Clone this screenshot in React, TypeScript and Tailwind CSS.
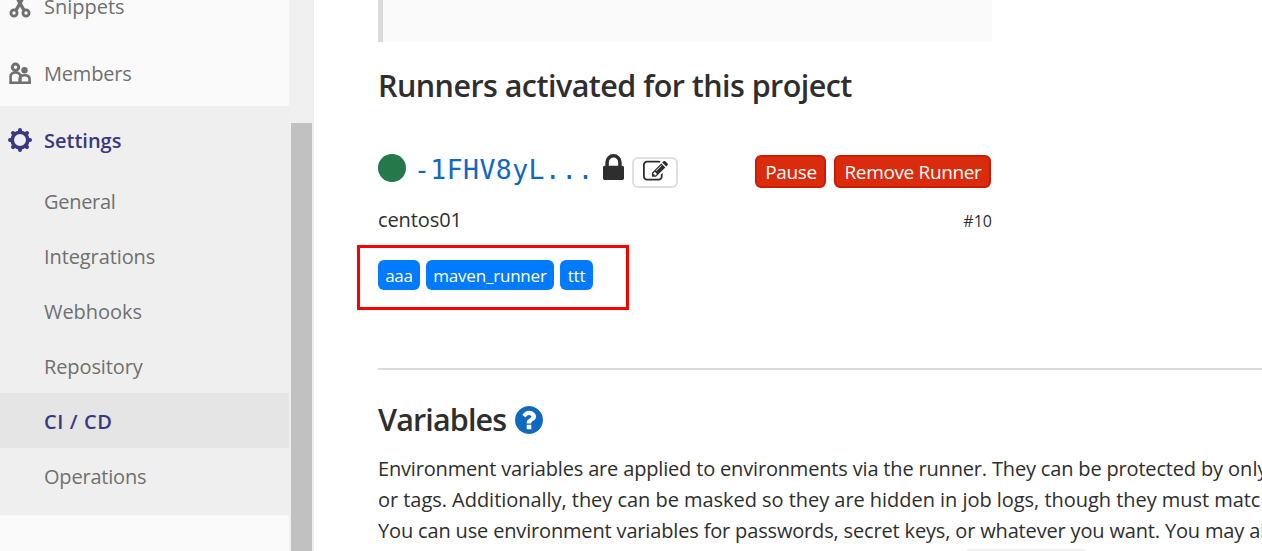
import type { ReactNode } from 'react';

const subItems = [
  { label: 'General', className: 'tracking-[-0.3px]' },
  { label: 'Integrations', className: 'tracking-[-0.1px]' },
  { label: 'Webhooks', className: 'tracking-[-0.05px]' },
  { label: 'Repository', className: 'tracking-[-0.1px]' },
  { label: 'CI / CD', className: 'bg-[#e5e5e5] font-[550] tracking-[0.6px] text-[#393982]' },
  { label: 'Operations', className: 'tracking-[-0.2px]' },
];

const Tag = ({ children, className }: { children: ReactNode; className: string }) => (
  <span className={`flex h-[30px] shrink-0 items-center justify-center whitespace-nowrap rounded-[6px] bg-[#007bff] pt-[2px] text-[17px] tracking-[-0.2px] text-white ${className}`}>{children}</span>
);

const DangerButton = ({ children, className }: { children: ReactNode; className: string }) => (
  <button className={`flex h-[33px] shrink-0 items-center justify-center whitespace-nowrap rounded-[6px] border-2 border-[#c91c00] bg-[#db2b0d] pl-[1px] pt-[2px] text-[19px] tracking-[-0.35px] text-white ${className}`}>{children}</button>
);

export default function App() {
  return (
    <div className="flex h-[551px] w-[1262px] overflow-hidden bg-white font-['Open_Sans','Noto_Sans',sans-serif] text-[#2e2e2e]">
      <aside className="flex w-[314px] shrink-0 bg-[#f0f0f0]">
        <nav className="flex w-[289px] flex-col bg-[#fafafa] text-[20px] text-[#707070]">
          <div className="-mt-[27px] flex h-[67px] items-center pl-[8px]">
            <svg viewBox="0 0 24 24" className="-mt-[1px] h-6 w-6" fill="none" stroke="#707070">
              <circle cx="6" cy="19" r="3.100" strokeWidth="2.800" />
              <circle cx="18" cy="19" r="3.100" strokeWidth="2.800" />
              <path d="M8.200 16 16 2M15.800 16 8 2" strokeWidth="3.400" />
            </svg>
            <span className="ml-3">Snippets</span>
          </div>
          <div className="flex h-[66px] items-center pl-[8px] pt-[2px]">
            <svg viewBox="0 0 24 24" className="-mt-[1px] h-6 w-6" fill="none" stroke="#707070">
              <circle cx="7.500" cy="5.300" r="3.200" strokeWidth="3" />
              <circle cx="16.500" cy="8.300" r="3.200" fill="#707070" stroke="none" />
              <path d="M2.600 20.700v-6q0-4.200 4.900-4.200t4.900 4.200v6zM11.600 20.700v-3.500q0-4 5-4t5 4v3.500z" strokeWidth="2.600" />
            </svg>
            <span className="ml-3 tracking-[-0.2px]">Members</span>
          </div>
          <div className="h-[409px] bg-[#efefef]">
            <div className="flex h-[67px] items-center pl-[8px] pt-[1px] font-[550] text-[#393982]">
              <svg viewBox="0 0 24 24" className="h-6 w-6" fill="none" stroke="#393982">
                <circle cx="12" cy="12" r="7.800" strokeWidth="3.600" />
                <path d="M12 2v1.500M12 20.500v1.500M2 12h1.500M20.500 12h1.500M5 5l1 1M18 18l1 1M19 5l-1 1M6 18l-1 1" strokeWidth="4" strokeLinecap="round" />
              </svg>
              <span className="ml-3 pt-[1px]">Settings</span>
            </div>
            {subItems.map(({ label, className }) => (
              <div key={label} className={`flex h-[55px] items-center pl-[44px] pt-[2px] ${className}`}>{label}</div>
            ))}
          </div>
        </nav>
        <div className="ml-[2px] mt-[123px] w-[21px] bg-[#c1c1c1]" />
      </aside>

      <main className="w-[948px] shrink-0 pl-[64px]">
        <div className="h-[42px] w-[614px] border-l-[5px] border-[#dbdbdb] bg-[#fafafa]" />
        <h2 className="mt-[21px] h-[44px] whitespace-nowrap text-[30.5px] leading-[44px] font-[550] tracking-[-0.55px]">Runners activated for this project</h2>
        <div className="mt-[46px] flex h-[36px] w-[614px] items-start">
          <span className="mt-[1px] h-[28px] w-[28px] rounded-full bg-[#24784a]" />
          <span className="ml-[8px] w-[179px] whitespace-nowrap font-['DejaVu_Sans_Mono',monospace] text-[26.500px] leading-[34px] tracking-[0.4px] text-[#1068bf]">-1FHV8yL...</span>
          <svg viewBox="320 128 1152 1408" preserveAspectRatio="none" className="ml-[10px] mt-[1px] h-[26px] w-[21px] fill-[#2e2e2e]">
            <path d="M640 768h512v-192q0-106-75-181t-181-75-181 75-75 181v192zm832 96v576q0 40-28 68t-68 28h-960q-40 0-68-28t-28-68v-576q0-40 28-68t68-28h32v-192q0-184 132-316t316-132 316 132 132 316v192h32q40 0 68 28t28 68z" />
          </svg>
          <button className="ml-[8px] mt-[4px] flex h-[31px] w-[46px] items-center justify-center rounded-[6px] border-2 border-[#dfdfdf] bg-white">
            <svg viewBox="0 0 1792 1792" className="-mt-[3px] h-[25px] w-[25px] fill-[#2e2e2e]">
              <path d="M888 1184l116-116-152-152-116 116v56h96v96h56zm440-720q-16-16-33 1l-350 350q-17 17-1 33t33-1l350-350q17-17 1-33zm80 594v190q0 119-84.500 203.500t-203.500 84.500h-832q-119 0-203.500-84.500t-84.500-203.500v-832q0-119 84.500-203.500t203.500-84.500h832q63 0 117 25 15 7 18 23 3 17-9 29l-49 49q-14 14-32 8-23-6-45-6h-832q-66 0-113 47t-47 113v832q0 66 47 113t113 47h832q66 0 113-47t47-113v-126q0-13 9-22l64-64q15-15 35-7t20 29zm-96-738l288 288-672 672h-288v-288zm444 132l-92 92-288-288 92-92q28-28 68-28t68 28l152 152q28 28 28 68t-28 68z" />
            </svg>
          </button>
          <div className="ml-auto mr-[1px] flex gap-2">
            <DangerButton className="mt-[2px] w-[71px]">Pause</DangerButton>
            <DangerButton className="mt-[2px] w-[157px]">Remove Runner</DangerButton>
          </div>
        </div>
        <div className="mt-[14px] flex h-[32px] w-[614px] items-center justify-between pt-[2px]">
          <span className="text-[20px] tracking-[-0.1px]">centos01</span>
          <span className="pt-[1px] text-[16px]">#10</span>
        </div>
        <div className="-ml-[21px] mt-[10px] flex h-[65px] w-[272px] gap-[6px] border-3 border-[#fc0000] pl-[18px] pt-[12px]">
          <Tag className="w-[42px]">aaa</Tag>
          <Tag className="w-[128px]">maven_runner</Tag>
          <Tag className="w-[33px]">ttt</Tag>
        </div>
        <hr className="mt-[58px] border-t-2 border-[#dcdcdc]" />
        <div className="mt-[28px] flex h-[44px] items-center">
          <h2 className="w-[137px] whitespace-nowrap text-[30.5px] font-[550] tracking-[-0.85px]">Variables</h2>
          <svg viewBox="128 128 1536 1536" className="-mt-[1px] h-[28px] w-[28px] fill-[#1068bf]">
            <path d="M1024 1376v-192q0-14-9-23t-23-9h-192q-14 0-23 9t-9 23v192q0 14 9 23t23 9h192q14 0 23-9t9-23zm256-672q0-88-55.500-163t-138.500-116-170-41q-243 0-371 213-15 24 8 42l132 100q7 6 19 6 16 0 25-12 53-68 86-92 34-24 86-24 48 0 85.500 26t37.500 59q0 38-20 61t-68 45q-63 28-115.500 86.500t-52.500 125.500v36q0 14 9 23t23 9h192q14 0 23-9t9-23q0-19 21.500-49.500t54.500-49.500q32-18 49-28.500t46-35 44.500-48 28-60.500 12.500-81zm384 192q0 209-103 385.500t-279.500 279.500-385.500 103-385.500-103-279.500-279.500-103-385.500 103-385.500 279.500-279.500 385.500-103 385.500 103 279.500 279.500 103 385.500z" />
          </svg>
        </div>
        <div className="mt-[11px] whitespace-nowrap text-[20px] leading-[31px]">
          <p className="tracking-[-0.17px]">Environment variables are applied to environments via the runner. They can be protected by <span className="tracking-[0.1px]">only exposing</span></p>
          <p className="tracking-[-0.04px]">or tags. Additionally, they can be masked so they are hidden in job logs, though they must match certain</p>
          <p className="tracking-[-0.16px]">You can use environment variables for passwords, secret keys, or whatever you want. You may also add</p>
        </div>
        <div className="ml-[586px] mt-[3px] h-6 w-[124px] rounded-md bg-[#f0f0f0]" />
      </main>
    </div>
  );
}
